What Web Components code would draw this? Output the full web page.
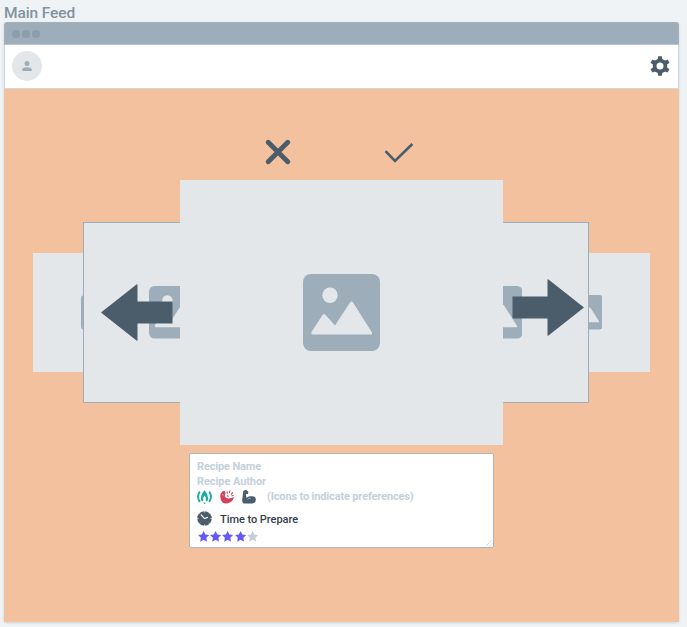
<!DOCTYPE html>
<html lang="en"><head><meta charset="utf-8"><title>Main Feed</title>
<style>html,body{margin:0;height:627px;overflow:hidden;background:#eff3f6;font-family:Roboto,"Liberation Sans",sans-serif}</style></head>
<body><main-feed></main-feed>
<script>
const define=(name,markup,ready)=>{
  const t=document.createElement('template');t.innerHTML=markup;
  customElements.define(name,class extends HTMLElement{
    connectedCallback(){ if(this.shadowRoot)return;
      this.attachShadow({mode:'open'}).append(t.content.cloneNode(true)); ready&&ready(this);}
  });
};
// Text line tracked so that it fills the width given in its attribute.
define('fit-text',`<style>:host{display:block;white-space:nowrap}span{display:inline-block}</style><span><slot></slot></span>`,el=>{
  const s=el.shadowRoot.querySelector('span'),n=el.textContent.length,w=s.getBoundingClientRect().width;
  s.style.letterSpacing=((+el.getAttribute('width')-w)/n)+'px';
});
define('image-card',`<style>:host{display:grid;place-items:center;background:#e3e7ea;box-sizing:border-box;width:var(--w);height:var(--h)}svg{display:block;width:var(--icon);height:var(--icon)}</style>
<svg viewBox="0 0 77 77"><rect width="77" height="77" rx="8" fill="#9eadba"/><g fill="#e3e7ea"><circle cx="27" cy="21.3" r="7.7"/><path d="M8.5 58 19.7 40.8Q21 39 22.4 40.8L32 51.5 47 28.5Q48.5 26.4 50 28.5L69 58.500Q69.6 60.500 68 60.500H10Q7.800 60.500 8.500 58Z"/></g></svg>`);
define('browser-bar',`<style>:host{display:flex;gap:2px;align-items:center;height:23px;box-sizing:border-box;padding-left:6.500px;background:#9dadb9;border:1px solid #a4b2bd;border-bottom-color:#b7c5cf;border-radius:3px 3px 0 0}i{width:8px;height:8px;border-radius:50%;background:#8c9dab}</style><i></i><i></i><i></i>`);
define('nav-bar',`<style>:host{display:flex;align-items:center;justify-content:space-between;height:44px;box-sizing:border-box;padding:0 8px 1px 7px;background:#fff;border:1px solid #ccd8e0;border-top:0}
.a{display:grid;place-items:center;width:30px;height:30px;border-radius:50%;background:#e3e7ea}svg{display:block}</style>
<div class="a"><svg width="10" height="10" viewBox="0 0 10 10" fill="#9eadba"><circle cx="5" cy="2.5" r="2.5"/><path d="M.3 10V8.500Q.3 6.500 5 6.300 9.700 6.500 9.700 8.500V10Z"/></svg></div>
<svg width="20" height="20" viewBox="-10 -10 20 20"><g fill="#4b5d6b"><circle r="7.300"/><path d="M-2.400-6-1.900-9.800h3.800L2.400-6V6L1.900 9.800h-3.800L-2.400 6Z"/><path transform="rotate(60)" d="M-2.400-6-1.900-9.800h3.800L2.400-6V6L1.900 9.800h-3.800L-2.400 6Z"/><path transform="rotate(120)" d="M-2.400-6-1.900-9.800h3.800L2.400-6V6L1.900 9.800h-3.800L-2.400 6Z"/></g><circle r="3.500" fill="#fff"/></svg>`);
define('vote-icons',`<style>:host{display:flex;gap:92px;justify-content:center;height:30px;padding-right:5px}svg{display:block;fill:none;stroke:#4b5d6b}</style>
<svg width="28" height="28" viewBox="0 0 28 28"><path d="M4.200 4.200 23.800 23.800M23.800 4.200 4.200 23.800" stroke-width="4.800" stroke-linecap="round"/></svg>
<svg width="30" height="28" viewBox="0 0 30 28"><path d="M1.500 13.200 11 23 28.300 6" stroke-width="2.600"/></svg>`);
define('feed-carousel',`<style>:host{display:grid;grid-template-columns:617px;justify-content:center;height:265px;align-items:center}
image-card{grid-area:1/1}
.o{--w:130px;--h:119px;--icon:34.600px}.m{--w:184px;--h:181px;--icon:52.500px;border:1px solid #9dadb9}.c{--w:323.400px;--h:265px;--icon:77px;z-index:1;margin-left:147px}
.r{justify-self:end}.m.l{margin-left:50px}.m.r{margin-right:61px;--w:186px}
svg{grid-area:1/1;z-index:2;display:block;fill:#4b5d6b}.al{margin:0 0 0 67.500px}.ar{justify-self:end;margin:0 66px 10px 0}</style>
<image-card class="o l"></image-card><image-card class="o r"></image-card><image-card class="m l"></image-card><image-card class="m r"></image-card><image-card class="c"></image-card>
<svg class="al" width="72" height="58" viewBox="0 0 72 58"><path d="M0 28.500 35.800.300Q36.500 0 36.500 1V17.500H71.500V39.500H36.500V56Q36.500 57 35.800 56.700Z"/></svg>
<svg class="ar" width="72" height="58" viewBox="0 0 72 58"><path d="M72 28.500 36.200.300Q35.500 0 35.500 1V17.500H.500V39.500H35.500V56Q35.500 57 36.200 56.700Z"/></svg>`);
define('star-rating',`<style>:host{display:flex;gap:1.300px}svg{width:11.200px;height:11px;fill:#6558f5}svg:last-child{fill:#c4ced6}</style>`+'<svg viewBox="0 0 24 24"><path d="M12 0 15.800 7.600 24 8.800 18 14.700 19.400 23.500 12 19.200 4.600 23.500 6 14.700 0 8.800 8.200 7.600Z"/></svg>'.repeat(5));
define('recipe-card',`<style>:host{display:block;box-sizing:border-box;width:305px;height:95px;margin:8px auto 0 185px;padding:5px 7px;background:#fff;border:1px solid #b5b5b5;border-radius:2px;font-size:11px;line-height:15px;color:#c4d0da;font-weight:700;position:relative}
.row{display:flex;align-items:center}.prefs{height:16px}.prefs svg{margin-right:8px}.prefs fit-text{margin:-1px 0 0 3px}.time{height:17px;margin-top:5px;color:#33404c;font-weight:500}.time svg{margin-right:8px}.time fit-text{margin-top:1px}star-rating{margin:4px 0 0 .5px}.g{position:absolute;right:0;bottom:0}svg{display:block;flex:none}</style>
<fit-text width="64">Recipe Name</fit-text><fit-text width="69">Recipe Author</fit-text>
<div class="row prefs">
<svg width="15" height="14" viewBox="0 0 15 14" fill="none" stroke="#1bac9c" stroke-width="1.900"><path d="M2.800 1.500Q-.7 6.500 2.800 12M12.200 1.500Q15.700 6.500 12.200 12"/><path d="M7.500.3Q3.300 5 4.100 10.500L6.200 11.500V7.500L7.500 5.500 8.800 7.500V11.500L10.900 10.500Q11.700 5 7.500.3Z" fill="#1bac9c" stroke="none"/><path d="M6.700 13.200h1.600" stroke-width="1.300"/></svg>
<svg width="14" height="14" viewBox="0 0 14 14"><path d="M.5 4Q2 .8 4.500.8L5.500 3 4.800 6Q5.500 8.500 8.500 8.500 11.500 8.300 13.800 7Q13.500 10.500 9.800 12.500 6 14.500 2.500 12.500-.5 9.500.5 4Z" fill="#d3425b"/><path d="M7 1.500 7.600 3.500M10 .6 9.400 3M13 2.500 11 4.500M13.500 5.300 11.500 6M7.200 5.500 8.600 6.500" stroke="#d3425b" stroke-width="1.100"/><path d="M2 4.500 4.200 5.500" stroke="#e98996"/></svg>
<svg width="14" height="14" viewBox="0 0 14 14"><path d="M1.300 1Q3-.3 4.800.3L6.500 2 5.800 4 3.900 3.900 4.500 8Q6.500 5.700 9 6.300 14 5.800 13.800 9.500 14 13 10.500 13.500H3Q0 13.500 .2 10Z" fill="#4b5d6b"/><path d="M5.500 9.500Q7 7.500 8.800 8.500" stroke="#a5b0b8" stroke-width=".9" fill="none"/></svg>
<fit-text width="146.500">(Icons to indicate preferences)</fit-text></div>
<div class="row time"><svg width="15" height="15" viewBox="0 0 15 15"><circle cx="7.500" cy="7.500" r="7.300" fill="#4b5d6b"/><path d="M4 3.700 7.500 7.600 11 6.200" stroke="#fff" stroke-width="1.200" fill="none"/><path d="M7.500 0V1.500M7.500 13.500V15M0 7.500H1.500M13.500 7.500H15M2.300 2.300 3.200 3.200M12.700 2.300 11.800 3.200M2.300 12.700 3.200 11.800M12.700 12.700 11.800 11.800" stroke="#cfd6da"/></svg><fit-text width="78">Time to Prepare</fit-text></div>
<star-rating></star-rating>
<svg class="g" width="7" height="7" viewBox="0 0 7 7"><path d="M0 6 6 0M3.500 6.500 6.500 3.500" stroke="#bbb" stroke-width=".8" stroke-dasharray="1 .6"/></svg>`);
define('main-feed',`<style>:host{display:block;padding:4px 8px 0 4px}.title{height:18px;line-height:18px;font-size:15.500px;font-weight:500;color:#8292a1}
.window{height:600px;border-radius:3px;box-shadow:0 1px 3px #0002;display:flex;flex-direction:column}.feed{flex:1;background:#f4c19e;padding-top:49px;box-sizing:border-box}feed-carousel{margin-top:12px}</style>
<div class="title"><fit-text width="71">Main Feed</fit-text></div>
<div class="window"><browser-bar></browser-bar><nav-bar></nav-bar><div class="feed"><vote-icons></vote-icons><feed-carousel></feed-carousel><recipe-card></recipe-card></div></div>`);
</script></body></html>
